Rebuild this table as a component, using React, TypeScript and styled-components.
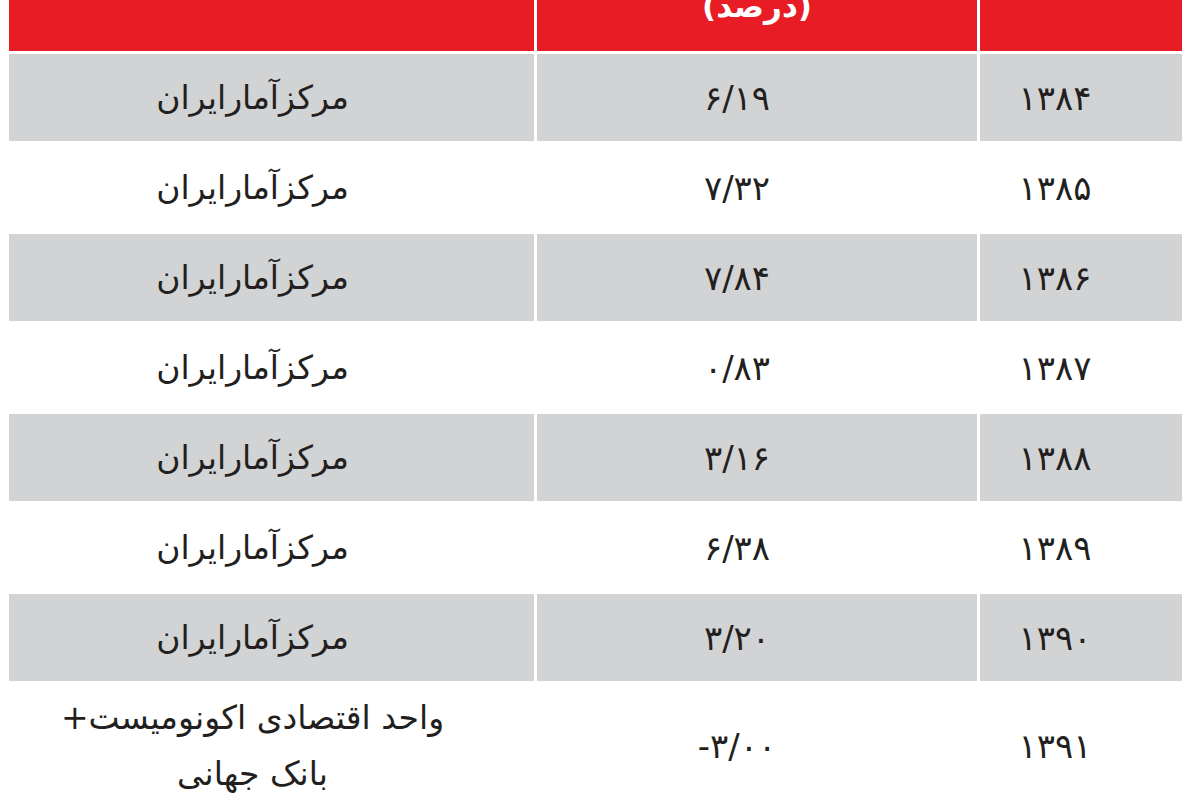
import styled, { createGlobalStyle } from 'styled-components';

type RowData = {
  year: string;
  rate: string;
  source: string[];
};

const rows: RowData[] = [
  { year: '۱۳۸۴', rate: '۶/۱۹', source: ['مرکزآمارایران'] },
  { year: '۱۳۸۵', rate: '۷/۳۲', source: ['مرکزآمارایران'] },
  { year: '۱۳۸۶', rate: '۷/۸۴', source: ['مرکزآمارایران'] },
  { year: '۱۳۸۷', rate: '۰/۸۳', source: ['مرکزآمارایران'] },
  { year: '۱۳۸۸', rate: '۳/۱۶', source: ['مرکزآمارایران'] },
  { year: '۱۳۸۹', rate: '۶/۳۸', source: ['مرکزآمارایران'] },
  { year: '۱۳۹۰', rate: '۳/۲۰', source: ['مرکزآمارایران'] },
  {
    year: '۱۳۹۱',
    rate: '-۳/۰۰',
    source: ['واحد اقتصادی اکونومیست+', 'بانک جهانی'],
  },
];

const GlobalStyle = createGlobalStyle`
  body {
    margin: 0;
    background: #ffffff;
    font-family: "DejaVu Sans", "Noto Sans", sans-serif;
  }
`;

const App: React.FC = () => {
  return (
    <>
      <GlobalStyle />
      <Table>
        <Row>
          <HeaderCell />
          <HeaderCell>
            <HeaderText>(درصد)</HeaderText>
          </HeaderCell>
          <HeaderCell />
        </Row>
        {rows.map((row, index) => {
          const shaded = index % 2 === 0;
          const tall = row.source.length > 1;
          return (
            <Row key={row.year}>
              <Cell $shaded={shaded} $tall={tall} $shift={52}>
                <NumberText $spacing={6}>{row.year}</NumberText>
              </Cell>
              <Cell $shaded={shaded} $tall={tall} $shift={40}>
                <NumberText $spacing={2}>{row.rate}</NumberText>
              </Cell>
              <Cell $shaded={shaded} $tall={tall} $shift={38}>
                <SourceText>
                  {row.source.map((line) => (
                    <span key={line}>{line}</span>
                  ))}
                </SourceText>
              </Cell>
            </Row>
          );
        })}
      </Table>
    </>
  );
};

const Table = styled.div`
  direction: rtl;
  display: flex;
  flex-direction: column;
  gap: 3px;
  margin: 0 18px 0 9px;
`;

const Row = styled.div`
  display: grid;
  grid-template-columns: 202px 440px 525px;
  gap: 3px;
`;

const HeaderCell = styled.div`
  height: 51px;
  background: #e81c24;
  overflow: hidden;
  display: flex;
  align-items: flex-end;
  justify-content: center;
  padding-bottom: 29px;
  box-sizing: border-box;
`;

const HeaderText = styled.span`
  color: #ffffff;
  font-size: 31px;
  font-weight: bold;
  line-height: 1;
  white-space: nowrap;
`;

const Cell = styled.div<{ $shaded: boolean; $tall: boolean; $shift: number }>`
  height: ${({ $tall }) => ($tall ? '124px' : '87px')};
  background: ${({ $shaded }) => ($shaded ? '#d1d3d4' : '#ffffff')};
  display: flex;
  align-items: center;
  justify-content: center;
  padding-right: ${({ $shift }) => $shift}px;
  box-sizing: border-box;
  color: #231f20;
`;

const NumberText = styled.span<{ $spacing: number }>`
  direction: ltr;
  font-size: 34px;
  line-height: 1;
  letter-spacing: ${({ $spacing }) => $spacing}px;
`;

const SourceText = styled.div`
  display: flex;
  flex-direction: column;
  align-items: center;
  font-size: 33px;
  line-height: 56px;
  white-space: nowrap;
`;

export default App;
